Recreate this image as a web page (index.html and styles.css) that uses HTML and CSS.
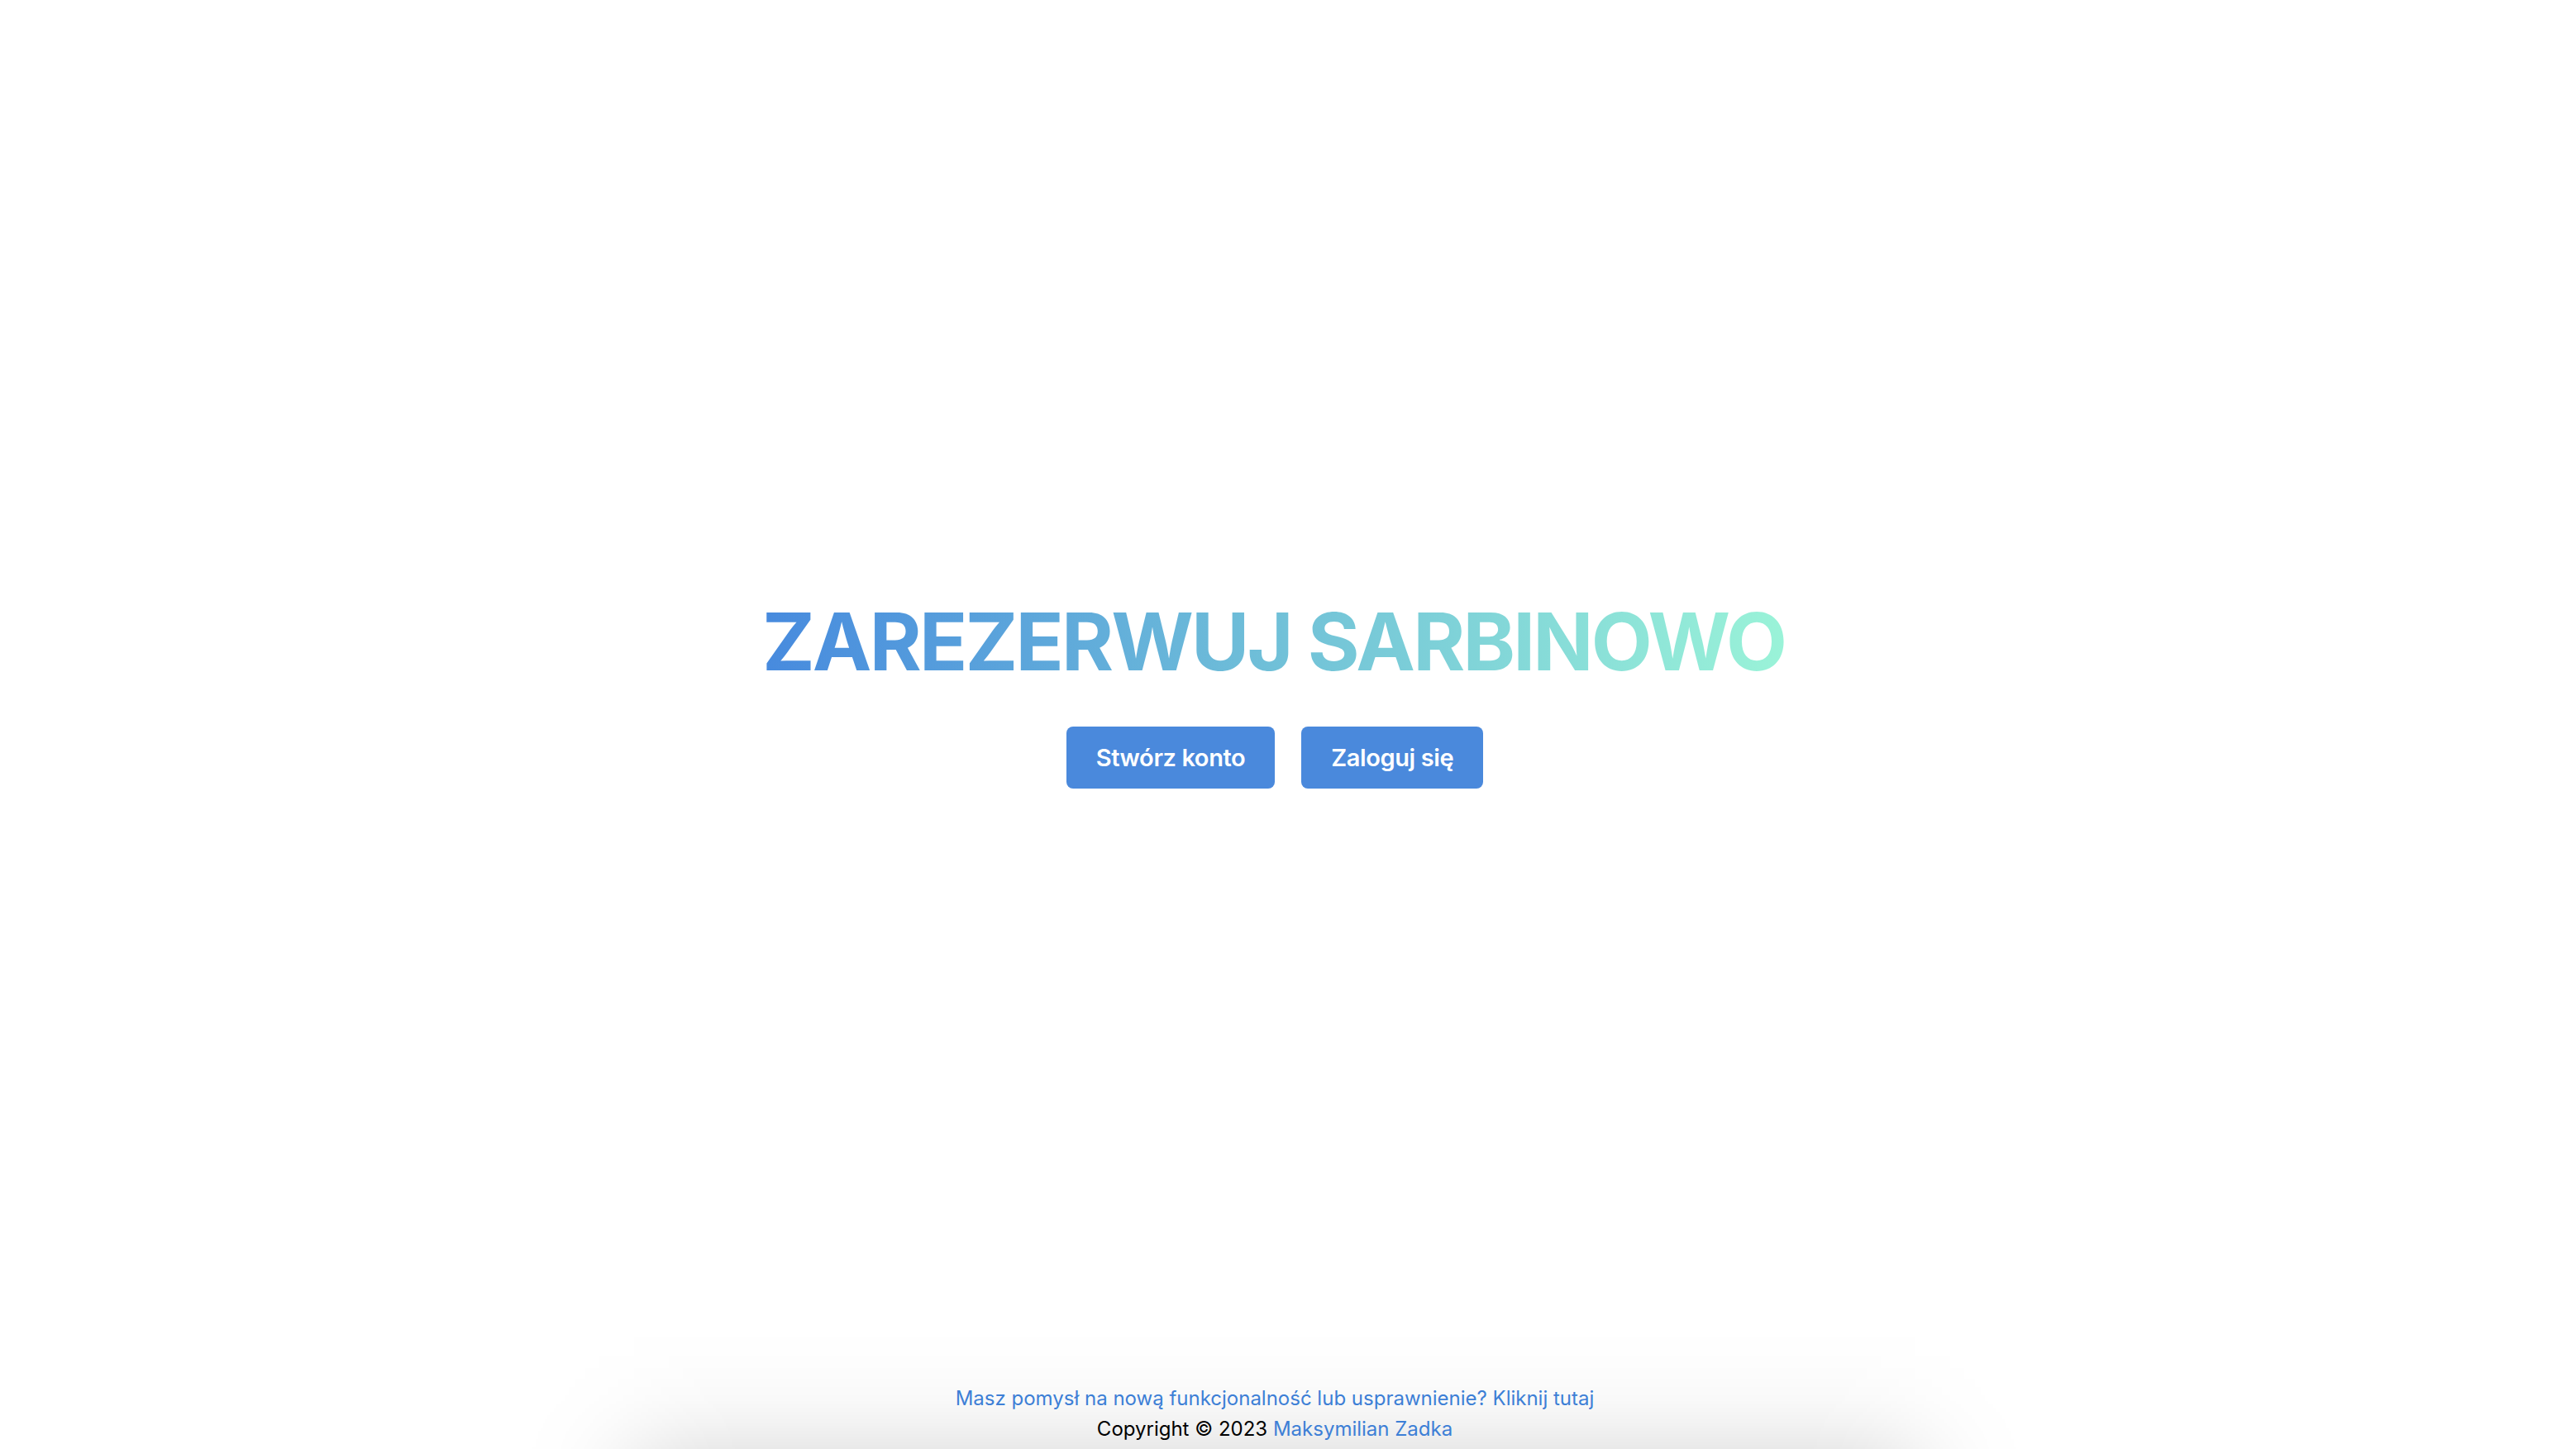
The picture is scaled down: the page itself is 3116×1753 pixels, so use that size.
FILE: index.html
```html
<!DOCTYPE html>
<html lang="pl">
<head>
<meta charset="utf-8">
<title>Zarezerwuj Sarbinowo</title>
<link rel="stylesheet" href="styles.css">
</head>
<body>
<div class="page">
  <main class="hero">
    <h1 class="title">ZAREZERWUJ SARBINOWO</h1>
    <div class="actions">
      <a class="btn" href="#">Stwórz konto</a>
      <a class="btn" href="#">Zaloguj się</a>
    </div>
  </main>
  <footer class="footer">
    <div class="footer-shadow"></div>
    <a class="link" href="#">Masz pomysł na nową funkcjonalność lub usprawnienie? Kliknij tutaj</a>
    <p class="copy">Copyright © 2023 <a class="link" href="#">Maksymilian Zadka</a></p>
  </footer>
</div>
</body>
</html>
```

FILE: styles.css
```css
html, body {
  margin: 0;
  padding: 0;
  background: #ffffff;
}

body {
  font-family: Inter, "Noto Sans", "Liberation Sans", sans-serif;
  color: #000;
}

.page {
  position: relative;
  height: 100vh;
  box-sizing: border-box;
  padding-right: 32px;
  display: flex;
  flex-direction: column;
  overflow: hidden;
}

.hero {
  flex: 1;
  display: flex;
  flex-direction: column;
  align-items: center;
  justify-content: center;
}

.title {
  margin: 0 0 0 -3px;
  font-size: 96px;
  line-height: 115px;
  font-weight: 700;
  letter-spacing: -2.8px;
  background: linear-gradient(90deg, #478ade 0%, #70c0d8 50%, #9af3d8 100%);
  -webkit-background-clip: text;
  background-clip: text;
  color: transparent;
}

.actions {
  display: flex;
  gap: 32px;
  margin-top: 45px;
}

.btn {
  display: flex;
  align-items: center;
  justify-content: center;
  height: 75px;
  padding: 0 36px;
  box-sizing: border-box;
  background: #4a89dc;
  color: #fff;
  border-radius: 8px;
  font-size: 29px;
  font-weight: 600;
  letter-spacing: -0.4px;
  text-decoration: none;
}

.footer {
  position: relative;
  display: flex;
  flex-direction: column;
  align-items: center;
  padding: 0 0 6px;
  font-size: 24px;
  line-height: 37px;
}

.footer-shadow {
  position: absolute;
  left: 50%;
  bottom: 0;
  width: 1850px;
  height: 150px;
  margin-left: -925px;
  pointer-events: none;
  background: linear-gradient(to top,
    rgba(0, 0, 0, 0.085) 0px,
    rgba(0, 0, 0, 0.05) 30px,
    rgba(0, 0, 0, 0.025) 60px,
    rgba(0, 0, 0, 0.011) 90px,
    rgba(0, 0, 0, 0.004) 120px,
    rgba(0, 0, 0, 0) 150px);
  -webkit-mask-image: linear-gradient(to right,
    rgba(0,0,0,0) 0px, rgba(0,0,0,0.023) 30px, rgba(0,0,0,0.067) 60px,
    rgba(0,0,0,0.16) 90px, rgba(0,0,0,0.31) 120px, rgba(0,0,0,0.5) 150px,
    rgba(0,0,0,0.69) 180px, rgba(0,0,0,0.84) 210px, rgba(0,0,0,0.93) 240px,
    rgba(0,0,0,0.977) 270px, #000 300px,
    #000 calc(100% - 300px),
    rgba(0,0,0,0.977) calc(100% - 270px), rgba(0,0,0,0.93) calc(100% - 240px),
    rgba(0,0,0,0.84) calc(100% - 210px), rgba(0,0,0,0.69) calc(100% - 180px),
    rgba(0,0,0,0.5) calc(100% - 150px), rgba(0,0,0,0.31) calc(100% - 120px),
    rgba(0,0,0,0.16) calc(100% - 90px), rgba(0,0,0,0.067) calc(100% - 60px),
    rgba(0,0,0,0.023) calc(100% - 30px), rgba(0,0,0,0) 100%);
  mask-image: linear-gradient(to right,
    rgba(0,0,0,0) 0px, rgba(0,0,0,0.023) 30px, rgba(0,0,0,0.067) 60px,
    rgba(0,0,0,0.16) 90px, rgba(0,0,0,0.31) 120px, rgba(0,0,0,0.5) 150px,
    rgba(0,0,0,0.69) 180px, rgba(0,0,0,0.84) 210px, rgba(0,0,0,0.93) 240px,
    rgba(0,0,0,0.977) 270px, #000 300px,
    #000 calc(100% - 300px),
    rgba(0,0,0,0.977) calc(100% - 270px), rgba(0,0,0,0.93) calc(100% - 240px),
    rgba(0,0,0,0.84) calc(100% - 210px), rgba(0,0,0,0.69) calc(100% - 180px),
    rgba(0,0,0,0.5) calc(100% - 150px), rgba(0,0,0,0.31) calc(100% - 120px),
    rgba(0,0,0,0.16) calc(100% - 90px), rgba(0,0,0,0.067) calc(100% - 60px),
    rgba(0,0,0,0.023) calc(100% - 30px), rgba(0,0,0,0) 100%);
}

.link,
.copy {
  position: relative;
}

.link {
  color: #3d7fd6;
  text-decoration: none;
}

.copy {
  margin: 0;
}
```
